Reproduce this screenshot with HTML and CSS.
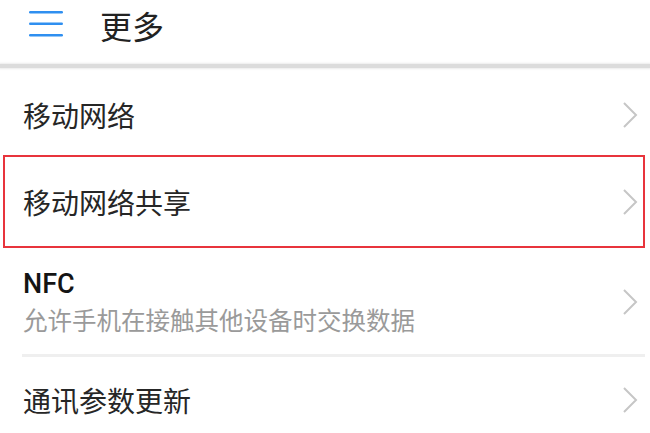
FILE: index.html
```html
<!DOCTYPE html>
<html lang="zh-CN">
<head>
<meta charset="utf-8">
<title>更多</title>
<link rel="stylesheet" href="styles.css">
</head>
<body>
<div class="page">
  <header class="header">
    <svg class="menu" width="34" height="26" viewBox="0 0 34 26">
      <rect x="0" y="0" width="34" height="2.6" rx="1.3"/>
      <rect x="0" y="11.5" width="34" height="2.6" rx="1.3"/>
      <rect x="0" y="23" width="34" height="2.6" rx="1.3"/>
    </svg>
    <h1 class="title">更多</h1>
  </header>
  <div class="header-line"></div>
  <ul class="list">
    <li class="row row-first">
      <span class="label">移动网络</span>
      <svg class="chev" width="16" height="26" viewBox="0 0 16 26"><polyline points="2,1 14,13 2,25"/></svg>
    </li>
    <li class="row row-marked">
      <span class="label">移动网络共享</span>
      <svg class="chev" width="16" height="26" viewBox="0 0 16 26"><polyline points="2,1 14,13 2,25"/></svg>
    </li>
    <li class="row row-nfc">
      <div class="texts">
        <span class="label label-latin">NFC</span>
        <span class="sub">允许手机在接触其他设备时交换数据</span>
      </div>
      <svg class="chev" width="16" height="26" viewBox="0 0 16 26"><polyline points="2,1 14,13 2,25"/></svg>
    </li>
    <li class="divider"></li>
    <li class="row row-last">
      <span class="label">通讯参数更新</span>
      <svg class="chev" width="16" height="26" viewBox="0 0 16 26"><polyline points="2,1 14,13 2,25"/></svg>
    </li>
  </ul>
</div>
</body>
</html>
```

FILE: styles.css
```css
* { box-sizing: border-box; }
html, body {
  margin: 0;
  padding: 0;
  background: #ffffff;
}
body {
  font-family: "Noto Sans CJK SC", "Noto Sans", sans-serif;
  color: #222222;
  width: 650px;
  height: 433px;
  overflow: hidden;
}
.page {
  display: flex;
  flex-direction: column;
}
.header {
  height: 64px;
  display: flex;
  align-items: flex-start;
  padding-left: 29px;
  padding-top: 11px;
}
.menu {
  fill: #2f8ff0;
  flex: none;
}
.title {
  margin: 0 0 0 37px;
  font-size: 32px;
  font-weight: 400;
  line-height: 32px;
  margin-top: -2px;
  color: #222;
}
.header-line {
  height: 4px;
  background: #dcdcdc;
  box-shadow: 0 0 2px 1px #ececec;
}
.list {
  list-style: none;
  margin: 0;
  padding: 0;
}
.row {
  display: flex;
  align-items: center;
  justify-content: space-between;
  padding-left: 23px;
  padding-right: 12px;
}
.row-first {
  height: 87px;
  padding-top: 6px;
}
.row-marked {
  height: 93px;
  margin: 0 5px 0 3px;
  border: 2px solid #e8343c;
  padding-left: 18px;
  padding-right: 5px;
}
.row-nfc {
  height: 106px;
  padding-top: 2px;
}
.row-last {
  height: 76px;
  padding-top: 10px;
}
.label {
  font-size: 28px;
  line-height: 34px;
  color: #262626;
}
.texts {
  display: flex;
  flex-direction: column;
}
.label-latin {
  font-family: Roboto, "Noto Sans", sans-serif;
  font-weight: 500;
  font-size: 27px;
  line-height: 32px;
  color: #141414;
}
.sub {
  font-size: 24.5px;
  line-height: 34px;
  color: #9a9a9a;
  margin-top: 3px;
}
.chev {
  flex: none;
  fill: none;
  stroke: #c6c6c6;
  stroke-width: 2;
}
.divider {
  height: 3px;
  margin: 0 5px 0 22px;
  background: #efefef;
}
```
